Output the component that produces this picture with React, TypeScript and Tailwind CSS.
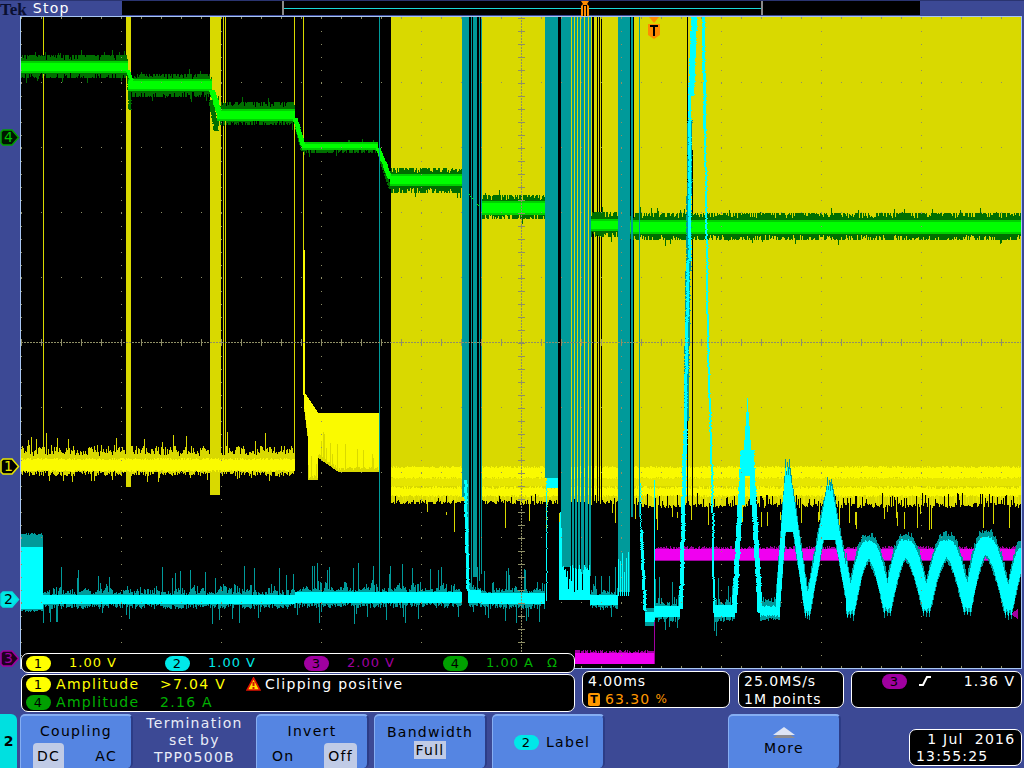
import React from 'react'

// seeded noise so every photo comes out the same
let seed = 90211
const rnd = () => {
  seed = (seed + 0x6d2b79f5) | 0
  let t = Math.imul(seed ^ (seed >>> 15), 1 | seed)
  t = (t + Math.imul(t ^ (t >>> 7), 61 | t)) ^ t
  return ((t ^ (t >>> 14)) >>> 0) / 4294967296
}

const layer = () => {
  let d = ''
  return {
    rect: (x: number, y: number, w: number, h: number) => {
      d += `M${Math.round(x)} ${Math.round(y)}h${Math.round(w)}v${Math.round(h)}h${-Math.round(w)}z`
    },
    col: (x: number, y1: number, y2: number) => {
      const a = Math.round(Math.min(y1, y2))
      const b = Math.round(Math.max(y1, y2))
      d += `M${x} ${a}h1v${Math.max(1, b - a)}h-1z`
    },
    get d() {
      return d
    },
  }
}
type Layer = ReturnType<typeof layer>

const line = (l: Layer, x1: number, y1: number, x2: number, y2: number, w: number) => {
  const n = Math.max(Math.abs(x2 - x1), Math.abs(y2 - y1), 1)
  for (let i = 0; i <= n; i++) {
    const x = x1 + ((x2 - x1) * i) / n
    const y = y1 + ((y2 - y1) * i) / n
    l.rect(x - w / 2 + (rnd() < 0.15 ? 1 : 0), y, w, 1)
  }
}

// channel 1, yellow
const yDim = layer()
const yMid = layer()
const yBright = layer()
const gaps = layer()

for (let x = 21; x < 295; x++) {
  const spike = rnd()
  const up = spike > 0.96 ? 432 + rnd() * 10 : 445 + rnd() * 11
  const down = spike < 0.05 ? 476 + rnd() * 6 : 471 + rnd() * 5
  yDim.col(x, up, down)
  yBright.col(x, 458 + rnd() * 2, 470 + rnd() * 2)
}
yDim.rect(43, 17, 1, 441)
yDim.rect(126, 17, 5, 470)
yDim.rect(210, 17, 10, 478)
yDim.rect(220, 17, 1, 450)
yDim.rect(223, 17, 1, 450)
yDim.rect(225, 17, 1, 450)
yDim.rect(294, 17, 1, 441)
yDim.rect(303, 17, 1, 235)
yBright.rect(303, 250, 2, 145)
for (let x = 304; x < 379; x++) {
  const top = x < 318 ? 392 + (x - 304) * 1.5 : 413
  const bottom = x < 308 ? 410 + (x - 304) * 8 : x < 318 ? 478 : Math.min(470, 456 + (x - 318) * 0.7)
  yDim.col(x, top, bottom + 2)
  yBright.col(x, top, bottom - (rnd() < 0.16 ? 12 + rnd() * 16 : rnd() * 3))
}
for (let x = 391; x < 1021; x++) {
  const right = x > 640
  const bottom = (right ? 503 : 500) + rnd() * 5
  yDim.col(x, 17, bottom)
  yBright.col(x, 466 + rnd() * 2, 477 + rnd() * 2)
  yMid.col(x, 478, 486)
  yBright.col(x, 486 + rnd() * 3, 495 + rnd() * 2)
  if (rnd() < 0.3) yMid.col(x, 495, bottom - 2)
  if (rnd() < (right ? 0.26 : 0.08)) gaps.col(x, 493 + rnd() * 8, 512)
  if (rnd() < 0.05) yDim.col(x, bottom, 512 + rnd() * 20)
}
;[
  [469, 2],
  [472, 1],
  [477, 2],
  [480, 1],
  [558, 3],
  [592, 2],
  [597, 1],
  [599, 1],
  [601, 1],
  [630, 1],
  [633, 1],
  [687, 1],
].forEach(([x, w]) => gaps.rect(x, 17, w, 496))
gaps.rect(692, 150, 1, 362)

// channel 3, pink
const pink = layer()
const pinkDim = layer()
for (let x = 655; x < 1021; x++) {
  pinkDim.col(x, 546 + rnd() * 3, 561)
  pink.col(x, 549, 560)
}
for (let x = 575; x < 654; x++) {
  pinkDim.col(x, 650 + rnd() * 3, 664)
  pink.col(x, 653, 664)
}
pinkDim.rect(654, 600, 1, 64)

// channel 4, green
const gDark = layer()
const gMid = layer()
const gCore = layer()
const greenRuns = [
  [21, 128, 67, 5, 12, 11],
  [128, 212, 85, 5, 11, 12],
  [217, 295, 115, 5, 13, 10],
  [302, 378, 146, 3, 4, 7],
  [390, 462, 180, 5, 12, 13],
  [481, 545, 208, 6, 13, 11],
  [590, 630, 225, 5, 13, 12],
  [630, 1021, 227, 6, 14, 13],
]
greenRuns.forEach(([a, b, c, core, up, down]) => {
  for (let x = a; x < b; x++) {
    const r = rnd()
    const top = c - up + (rnd() < 0.5 ? rnd() * 5 : 0) - (r > 0.96 ? 2 + rnd() * 4 : 0)
    const bot = c + down - (rnd() < 0.5 ? rnd() * 5 : 0) + (r < 0.04 ? 2 + rnd() * 4 : 0)
    gDark.col(x, top, bot)
    gMid.col(x, c - core - 1, c + core + 1)
    gCore.col(x, c - core + 1, c + core - 1)
  }
})
line(gDark, 128, 72, 130, 109, 3)
line(gDark, 211, 100, 216, 130, 5)
line(gDark, 296, 125, 302, 150, 3)
line(gDark, 379, 155, 390, 188, 3)
line(gCore, 128, 70, 132, 82, 4)
line(gCore, 212, 90, 219, 112, 6)
line(gCore, 295, 118, 303, 145, 5)
line(gCore, 378, 148, 390, 178, 5)
line(gCore, 466, 190, 479, 206, 1)

// channel 2, cyan. teal first (envelope and persistence), bright over it
const teal = layer()
const cyan = layer()
teal.rect(379, 17, 1, 585)
teal.rect(462, 17, 4, 480)
;[
  [466, 3],
  [471, 1],
  [473, 4],
  [479, 1],
  [481, 1],
].forEach(([x, w]) => teal.rect(x, 17, w, 556 + rnd() * 10))
teal.rect(545, 17, 13, 461)
teal.rect(561, 17, 10, 550)
for (let x = 571; x < 591; x++) {
  if (![571, 574, 577, 580, 584, 588].includes(x)) teal.col(x, 17, 570 + rnd() * 14)
}
teal.rect(618, 17, 9, 575)
teal.rect(627, 17, 3, 575)
teal.rect(631, 17, 2, 500)
teal.rect(639, 17, 1, 500)

const tealRun = (a: number, b: number, core: [number, number]) => {
  for (let x = a; x < b; x++) {
    const r = rnd()
    const amp = 3 + 9 * (0.5 + 0.5 * Math.sin(x / 17 + Math.sin(x / 5) * 2))
    const up = r > 0.93 ? 16 + rnd() * 14 : rnd() * amp
    const down = r < 0.08 ? 8 + rnd() * 14 : rnd() * 5
    teal.col(x, core[0] - up, core[1] + down)
    cyan.col(x, core[0], core[1])
  }
}
for (let x = 21; x < 43; x++) {
  teal.col(x, 535 - rnd() * 2, 610 + rnd() * 2)
  cyan.col(x, 547, 609)
}
tealRun(43, 295, [595, 604])
tealRun(295, 462, [592, 603])
tealRun(468, 481, [590, 603])
tealRun(481, 545, [593, 604])
tealRun(590, 618, [595, 605])
tealRun(654, 680, [606, 617])
tealRun(714, 735, [605, 617])
line(cyan, 465, 480, 468, 590, 3)
line(cyan, 546, 480, 546, 600, 1)
cyan.rect(547, 478, 11, 10)
for (let x = 559; x < 590; x++) {
  cyan.col(x, 600, 592 - rnd() * (x < 562 ? 90 : 26))
  if (rnd() < 0.5) cyan.col(x, 592, 562 + rnd() * 10)
}
for (let x = 618; x < 630; x += 2) cyan.col(x, 596, 575 - rnd() * 25)
line(cyan, 640, 483, 641, 530, 1)
line(cyan, 641, 530, 645, 610, 3)
for (let x = 645; x < 654; x++) {
  teal.col(x, 608, 626)
  cyan.col(x, 612, 622)
}
cyan.rect(654, 480, 1, 140)

// the tall excursions that leave the top of the screen
line(cyan, 694, 17, 691, 95, 6)
line(cyan, 690, 95, 689, 260, 3)
line(teal, 690, 120, 686, 420, 5)
line(cyan, 688, 260, 685, 430, 3)
line(cyan, 685, 430, 681, 608, 4)
line(cyan, 703, 17, 705, 130, 3)
line(cyan, 705, 130, 708, 350, 2)
line(cyan, 708, 350, 712, 480, 2)
line(cyan, 712, 480, 714, 612, 2)
line(cyan, 734, 612, 743, 450, 5)
line(cyan, 760, 612, 751, 450, 5)

const curve = [
  [760, 611],
  [777, 611],
  [787, 473],
  [807, 611],
  [829, 490],
  [850, 608],
  [868, 549],
  [887, 605],
  [905, 548],
  [926, 605],
  [946, 548],
  [967, 605],
  [985, 545],
  [1008, 607],
  [1024, 555],
]
// round crests, narrow troughs
const curveAt = (x: number) => {
  if (x < 760) return 611
  for (let i = 0; i < curve.length - 1; i++) {
    const [a, ya] = curve[i]
    const [b, yb] = curve[i + 1]
    if (x >= a && x <= b) {
      const t = (x - a) / (b - a)
      if (i <= 4) return ya + (yb - ya) * t
      const k = yb < ya ? Math.sin((t * Math.PI) / 2) : 1 - Math.cos((t * Math.PI) / 2)
      return ya + (yb - ya) * k
    }
  }
  return 600
}
for (let x = 760; x < 1021; x++) {
  const w = x > 845 ? 3 : 2
  const ys = [curveAt(x - w), curveAt(x), curveAt(x + w)]
  const t = x > 845 ? 9 : 6
  const top = Math.min(...ys)
  const bot = Math.max(...ys)
  teal.col(x, top - t - 3 - rnd() * 5, bot + t + 1 + rnd() * 3)
  cyan.col(x, top - t + rnd() * 2, bot + t - rnd() * 2)
}
for (let x = 741; x < 754; x++) {
  const top = 398 + Math.abs(x - 747) * 14
  cyan.col(x, top, Math.abs(x - 747) < 3 ? 476 : 505)
}
for (let x = 782; x < 795; x++) cyan.col(x, 476 + Math.abs(x - 788) * 9, 532)
for (let x = 822; x < 836; x++) cyan.col(x, 494 + Math.abs(x - 829) * 5, 540)

// graticule
const dots = layer()
for (let k = 0; k <= 10; k++) {
  const x = 21 + k * 100
  for (let y = 18; y < 668; y += 13) dots.rect(x, y, 1, 1)
}
for (let k = 0; k <= 10; k++) {
  const y = 17 + k * 65
  for (let x = 21; x < 1021; x += 20) dots.rect(x, y, 1, 1)
}
for (let x = 21; x < 1021; x += 20) {
  dots.rect(x, 18, 1, 1)
  dots.rect(x, 666, 1, 1)
}
for (let x = 21; x < 1021; x += 3) dots.rect(x, 342, 2, 1)
for (let y = 17; y < 668; y += 3) dots.rect(521, y, 1, 2)
for (let y = 17; y < 668; y += 13) dots.rect(518, y + 1, 7, 1)
for (let x = 21; x < 1021; x += 20) dots.rect(x, 339, 1, 7)

function Waves() {
  return (
    <svg viewBox="21 17 1000 651" className="block w-[1000px] h-[651px]" shapeRendering="crispEdges">
      <path d={yDim.d} fill="#d9d900" />
      <path d={yMid.d} fill="#e6e600" />
      <path d={yBright.d} fill="#fafa00" />
      <path d={gaps.d} fill="#000" />
      <path d={pinkDim.d} fill="#a000a0" />
      <path d={pink.d} fill="#f000f0" />
      <path d={gDark.d} fill="#006f00" />
      <path d={gMid.d} fill="#00d000" />
      <path d={gCore.d} fill="#00ff00" />
      <path d={teal.d} fill="#009a9a" />
      <path d={cyan.d} fill="#00ffff" />
      <path d={dots.d} fill="#8f8f66" />
      <polygon points="1011,614 1018,609 1018,619" fill="#a000a0" />
    </svg>
  )
}

function Pill({ n, color }: { n: string; color: string }) {
  return (
    <span className={`w-[25px] h-[15px] shrink-0 rounded-full flex items-center justify-center text-[13px] leading-none text-black ${color}`}>{n}</span>
  )
}

function Marker({ n, top, stroke, fill, text }: { n: string; top: string; stroke: string; fill: string; text: string }) {
  return (
    <div className={`absolute left-0 w-[20px] h-[17px] ${top}`}>
      <svg viewBox="0 0 20 17" className="absolute inset-0 w-[20px] h-[17px]">
        <polygon points="3,1 12,1 18.5,8.5 12,16 3,16 1,14 1,3" fill={fill} stroke={stroke} strokeWidth="1.5" />
      </svg>
      <span className={`absolute left-[2px] top-0 w-[13px] text-center text-[14px] leading-[17px] ${text}`}>{n}</span>
    </div>
  )
}

function SoftKey({ className, children }: { className: string; children: React.ReactNode }) {
  return (
    <div className={`h-[54px] shrink-0 rounded-t-[5px] rounded-br-[5px] bg-[#5585e2] border-t-2 border-l border-r-2 border-t-[#86aef2] border-l-[#86aef2] border-r-[#2c3c86] text-[14px] tracking-[1.3px] text-black ${className}`}>
      {children}
    </div>
  )
}

const readout = 'bg-black border border-white rounded-[7px]'

export default function App() {
  return (
    <div className="w-[1024px] h-[768px] overflow-hidden flex flex-col bg-[#3c4995] font-['DejaVu_Sans',sans-serif]">
      {/* top bar */}
      <div className="h-[16px] flex shrink-0 border-t border-[#2a3470]">
        <div className="w-[122px] h-[15px] flex items-start">
          <span className="font-['Liberation_Serif',serif] font-bold text-[17px] leading-[15px] mt-[1px] text-[#0a0f30]">Tek</span>
          <span className="text-[14px] leading-[15px] tracking-[1.3px] text-white ml-[6px]">Stop</span>
        </div>
        <div className="relative w-[798px] h-[14px] bg-black">
          <div className="absolute left-[160px] top-0 w-[481px] h-[14px] flex items-center border-x-[2px] border-[#8a8a8a]">
            <div className="w-full h-px bg-[#19d8d8]" />
          </div>
          <svg viewBox="0 0 10 15" className="absolute left-[458px] top-0 w-[10px] h-[15px]">
            <polygon points="1,0 9,0 7,3 8,4 9,5 9,15 1,15 1,5 3,3" fill="#ff8c00" />
            <rect x="3" y="5" width="1" height="10" fill="#000" />
            <rect x="6" y="5" width="1" height="10" fill="#000" />
            <rect x="3" y="4" width="4" height="1" fill="#000" />
          </svg>
        </div>
      </div>

      {/* screen */}
      <div className="flex h-[653px] shrink-0">
        <div className="relative w-[20px]">
          <Marker n="4" top="top-[113px]" stroke="#00a000" fill="#001400" text="text-[#00c000]" />
          <Marker n="1" top="top-[442px]" stroke="#e8e800" fill="#000" text="text-[#e8e800]" />
          <Marker n="2" top="top-[575px]" stroke="#00e0e0" fill="#00e8e8" text="text-black" />
          <Marker n="3" top="top-[634px]" stroke="#a000a0" fill="#200020" text="text-[#a000a0]" />
        </div>
        <div className="relative w-[1002px] h-[653px] border border-[#a8c6f4] bg-black">
          <Waves />
          <svg viewBox="0 0 12 22" className="absolute left-[627px] top-0 w-[12px] h-[22px]">
            <polygon points="1,0 11,0 6,6" fill="#ff8c00" />
            <polygon points="0,7 12,7 12,18 6,22 0,18" fill="#ff8c00" />
            <rect x="2" y="8" width="8" height="2" fill="#000" />
            <rect x="5" y="8" width="2" height="11" fill="#000" />
          </svg>
          <div className={`absolute left-0 top-[636px] w-[554px] h-[20px] flex items-center text-[13px] tracking-[1px] ${readout}`}>
            <div className="w-[139px] flex items-center pl-[4px] gap-[18px] text-[#ffff00]">
              <Pill n="1" color="bg-[#ffff00]" />
              <span>1.00 V</span>
            </div>
            <div className="w-[139px] flex items-center pl-[4px] gap-[18px] text-[#00e8e8]">
              <Pill n="2" color="bg-[#00e8e8]" />
              <span>1.00 V</span>
            </div>
            <div className="w-[139px] flex items-center pl-[4px] gap-[18px] text-[#a000a0]">
              <Pill n="3" color="bg-[#a000a0]" />
              <span>2.00 V</span>
            </div>
            <div className="flex items-center pl-[4px] gap-[18px] text-[#00b000]">
              <Pill n="4" color="bg-[#00a000]" />
              <span>1.00 A</span>
              <span className="-ml-[5px]">Ω</span>
            </div>
          </div>
        </div>
      </div>

      {/* readouts */}
      <div className="h-[45px] shrink-0 flex pl-[21px] text-[14px] tracking-[1px]">
        <div className={`w-[554px] h-[38px] mt-[5px] pl-[4px] flex flex-col justify-center tracking-[1.3px] ${readout}`}>
          <div className="h-[18px] flex items-center">
            <Pill n="1" color="bg-[#ffff00]" />
            <span className="w-[109px] pl-[5px] text-[#ffff00]">Amplitude</span>
            <span className="w-[86px] text-[#ffff00]">&gt;7.04 V</span>
            <svg viewBox="0 0 15 14" className="w-[15px] h-[14px]">
              <polygon points="7.5,1 14,13 1,13" fill="#ffe000" stroke="#e01000" strokeWidth="1.6" />
              <rect x="6.5" y="5" width="2" height="4" fill="#d01000" />
              <rect x="6.5" y="10" width="2" height="2" fill="#d01000" />
            </svg>
            <span className="ml-[4px] text-white">Clipping positive</span>
          </div>
          <div className="h-[18px] flex items-center">
            <Pill n="4" color="bg-[#00a000]" />
            <span className="w-[109px] pl-[5px] text-[#00b000]">Amplitude</span>
            <span className="text-[#00b000]">2.16 A</span>
          </div>
        </div>
        <div className={`ml-[7px] w-[148px] h-[37px] mt-[2px] pl-[5px] text-white ${readout}`}>
          <div className="h-[18px] leading-[18px]">4.00ms</div>
          <div className="h-[18px] flex items-center text-[#ff9800]">
            <span className="w-[12px] h-[13px] mr-[5px] rounded-[2px] bg-[#ff9800] text-black text-[11px] leading-[13px] font-bold text-center tracking-normal">T</span>
            63.30&nbsp;
            <span className="text-[12px] tracking-normal">%</span>
          </div>
        </div>
        <div className={`ml-[8px] w-[106px] h-[37px] mt-[2px] pl-[5px] text-white ${readout}`}>
          <div className="h-[18px] leading-[18px]">25.0MS/s</div>
          <div className="h-[18px] leading-[18px]">1M points</div>
        </div>
        <div className={`ml-[7px] w-[171px] h-[37px] mt-[2px] pr-[6px] text-white ${readout}`}>
          <div className="h-[18px] flex items-center">
            <span className="ml-[30px]"><Pill n="3" color="bg-[#a000a0]" /></span>
            <svg viewBox="0 0 12 10" className="ml-[12px] w-[12px] h-[10px]">
              <path d="M0 9h4L8 1h4" fill="none" stroke="#fff" strokeWidth="2" />
            </svg>
            <span className="ml-auto">1.36 V</span>
          </div>
        </div>
      </div>

      {/* soft keys */}
      <div className="flex-1 flex">
        <div className="w-[17px] h-[54px] rounded-tr-[6px] bg-[#00e0e0] flex items-center justify-center text-[14px] font-bold text-black">2</div>
        <SoftKey className="ml-[3px] w-[113px] flex flex-col items-center pt-[3px]">
          <span className="h-[24px] leading-[24px]">Coupling</span>
          <div className="w-full flex justify-between items-center pl-[12px] pr-[14px]">
            <span className="px-[4px] h-[26px] leading-[26px] rounded-t-[4px] bg-[#c0cbe6]">DC</span>
            <span>AC</span>
          </div>
        </SoftKey>
        <div className="w-[123px] pt-[1px] text-center text-[14px] leading-[17px] tracking-[1.3px] text-[#e8ecf8]">
          Termination
          <br />
          set by
          <br />
          TPP0500B
        </div>
        <SoftKey className="w-[113px] flex flex-col items-center pt-[3px]">
          <span className="h-[24px] leading-[24px]">Invert</span>
          <div className="w-full flex justify-between items-center pl-[15px] pr-[10px]">
            <span>On</span>
            <span className="px-[4px] h-[26px] leading-[26px] rounded-t-[4px] bg-[#c0cbe6]">Off</span>
          </div>
        </SoftKey>
        <SoftKey className="ml-[5px] w-[113px] flex flex-col items-center pt-[7px] leading-[18px]">
          <span>Bandwidth</span>
          <span className="px-[1px] bg-[#c0cbe6]">Full</span>
        </SoftKey>
        <SoftKey className="ml-[5px] w-[113px] flex items-center pl-[21px] gap-[7px]">
          <Pill n="2" color="bg-[#00e8e8]" />
          <span>Label</span>
        </SoftKey>
        <SoftKey className="ml-[123px] w-[113px] flex flex-col items-center pt-[11px]">
          <svg viewBox="0 0 22 11" className="w-[22px] h-[11px]">
            <polygon points="11,0 22,8 0,8" fill="#dde4f5" />
            <polygon points="4,8 18,8 22,11 0,11" fill="#8a8a90" />
          </svg>
          <span className="leading-[20px]">More</span>
        </SoftKey>
        <div className={`ml-[68px] mt-[15px] w-[113px] h-[37px] whitespace-pre text-[14px] leading-[17px] tracking-[1.2px] text-white pl-[6px] pt-[1px] ${readout}`}>
          <div>  1 Jul  2016</div>
          <div>13:55:25</div>
        </div>
      </div>
    </div>
  )
}
